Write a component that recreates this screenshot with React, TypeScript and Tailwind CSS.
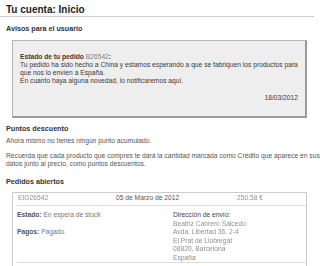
import React from "react";

const Blur = ({ children, className = "" }: { children: React.ReactNode; className?: string }) => (
  <span className={`inline-block blur-[0.75px] ${className}`}>{children}</span>
);

export default function App() {
  return (
    <div className="w-[320px] h-[266px] overflow-hidden bg-white font-['Liberation_Sans',Arial,sans-serif]">
      <div className="w-[314px] border-b border-[#cccccc] pl-[6px] pt-[4px] text-[10px] leading-[12px] font-bold text-[#222222]">
        Tu cuenta: Inicio
      </div>

      <h2 className="ml-[6px] mt-[7px] text-[7.2px] leading-[9px] font-bold text-[#333333]">
        Avisos para el usuario
      </h2>

      <div className="ml-[12px] mt-[7px] w-[295px] border-t border-l border-r-2 border-b-2 border-t-[#b5b5b5] border-l-[#b5b5b5] border-r-[#9a9a9a] border-b-[#9a9a9a] bg-[#eeeeee] pl-[7px] pr-[7px] pt-[12px] pb-[14px] text-[6.7px] leading-[8px] text-[#3a3a3a] whitespace-nowrap">
        <div>
          <span className="font-bold">Estado de tu pedido </span>
          <Blur className="text-[#7a7a7a]">B26542</Blur>
          <span className="font-bold">:</span>
        </div>
        <div>Tu pedido ha sido hecho a China y estamos esperando a que se fabriquen los productos para</div>
        <div>que nos lo envíen a España.</div>
        <div>En cuanto haya alguna novedad, lo notificaremos aquí.</div>
        <div className="mt-[9px] text-right">18/03/2012</div>
      </div>

      <h2 className="ml-[6px] mt-[6px] text-[7.2px] leading-[9px] font-bold text-[#333333]">
        Puntos descuento
      </h2>
      <p className="ml-[6px] mt-[4px] text-[6.7px] leading-[8px] text-[#555555] whitespace-nowrap">
        Ahora mismo no tienes ningún punto acumulado.
      </p>
      <p className="ml-[6px] mt-[7px] text-[6.7px] leading-[8px] text-[#555555] whitespace-nowrap">
        Recuerda que cada producto que compres te dará la cantidad marcada como Crédito que aparece en sus
        <br />
        datos junto al precio, como puntos descuentos.
      </p>

      <h2 className="ml-[6px] mt-[9px] text-[7.2px] leading-[9px] font-bold text-[#333333]">
        Pedidos abiertos
      </h2>

      <div className="ml-[12px] mt-[6px] w-[295px] h-[80px] border-t border-l border-r border-[#cccccc] pl-[4px] text-[6.7px] leading-[8px] whitespace-nowrap">
        <div className="flex border-b border-[#dddddd] pt-[1px] pb-[3px] text-[#555555]">
          <div className="w-[99px] pl-[1px]">
            <Blur className="text-[#909090]">EIO26542</Blur>
          </div>
          <div className="w-[121px]">05 de Marzo de 2012</div>
          <div>
            <Blur className="text-[#909090]">250.58 €</Blur>
          </div>
        </div>
        <div className="flex border-b border-[#dddddd] pt-[5px]">
          <div className="w-[155px]">
            <div>
              <span className="font-bold text-[#555555]">Estado:</span>{" "}
              <span className="text-[#777777]">En espera de stock</span>
            </div>
            <div className="mt-[9px]">
              <span className="font-bold text-[#555555]">Pagos:</span>{" "}
              <span className="text-[#777777]">Pagado.</span>
            </div>
          </div>
          <div className="pl-[1px] leading-[8.5px] text-[#909090]">
            <div className="text-[#444444]">Dirección de envío:</div>
            <Blur>Beatriz Cabrero Salcedo</Blur>
            <br />
            <Blur>Avda. Libertad 36, 2-4</Blur>
            <br />
            <Blur>El Prat de Llobregat</Blur>
            <br />
            <Blur>08820, Barcelona</Blur>
            <div>España</div>
          </div>
        </div>
      </div>
    </div>
  );
}
